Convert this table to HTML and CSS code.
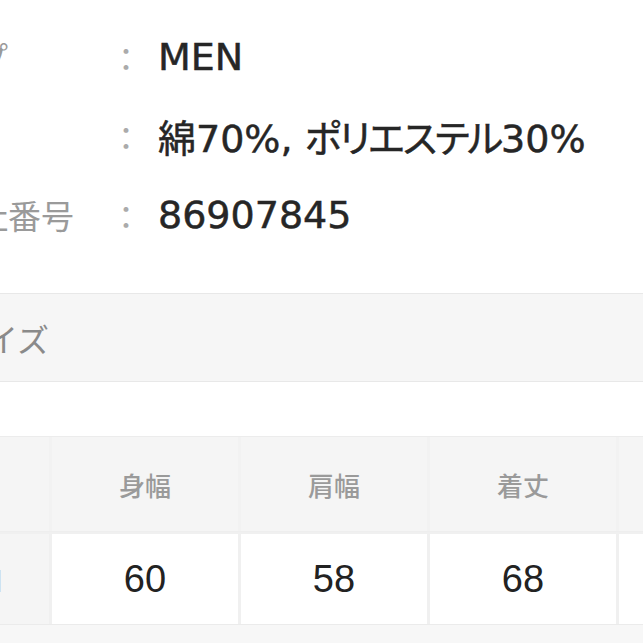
FILE: index.html
```html
<!DOCTYPE html>
<html lang="ja">
<head>
  <meta charset="UTF-8" />
  <meta name="viewport" content="width=device-width, initial-scale=1.0" />
  <title>商品詳細</title>
  <link rel="stylesheet" href="styles.css">
</head>
<body>
  <div class="page">
    <dl class="specs">
      <div class="spec-row">
        <dt class="spec-label">タイプ</dt>
        <dd class="spec-sep">：</dd>
        <dd class="spec-value">MEN</dd>
      </div>
      <div class="spec-row">
        <dt class="spec-label">素材</dt>
        <dd class="spec-sep">：</dd>
        <dd class="spec-value">綿70%, <span class="kana">ポリエステル</span>30%</dd>
      </div>
      <div class="spec-row">
        <dt class="spec-label">製造社番号</dt>
        <dd class="spec-sep">：</dd>
        <dd class="spec-value">86907845</dd>
      </div>
    </dl>

    <div class="section-bar">
      <h2 class="section-title">サイズ</h2>
    </div>

    <div class="size-table">
      <div class="size-head">
        <div class="cell head-cell"></div>
        <div class="cell head-cell">身幅</div>
        <div class="cell head-cell">肩幅</div>
        <div class="cell head-cell">着丈</div>
        <div class="cell head-cell">袖丈</div>
        <div class="cell head-cell">裄丈</div>
      </div>
      <div class="size-row">
        <div class="cell row-label">M</div>
        <div class="cell data-cell">60</div>
        <div class="cell data-cell">58</div>
        <div class="cell data-cell">68</div>
        <div class="cell data-cell">62</div>
        <div class="cell data-cell">-</div>
      </div>
    </div>
  </div>
</body>
</html>
```

FILE: styles.css
```css
* {
  margin: 0;
  padding: 0;
  box-sizing: border-box;
}
html, body {
  width: 100%;
  height: 100vh;
  overflow: hidden;
}
body {
  background: #fff;
  font-family: "Noto Sans CJK JP", sans-serif;
}
.page {
  margin-left: -136px;
  width: 1200px;
}

/* spec list */
.specs {
  padding: 17px 0 0 45px;
}
.spec-row {
  display: flex;
  align-items: center;
  height: 79px;
}
.spec-label {
  width: 201px;
  font-size: 33px;
  color: #9a9a9a;
  white-space: nowrap;
  overflow: hidden;
}
.spec-sep {
  width: 32px;
  font-size: 32px;
  text-align: center;
  color: #ababab;
}
.spec-value {
  margin-left: 16px;
  font-family: "DejaVu Sans", "Noto Sans CJK JP", sans-serif;
  font-size: 38px;
  color: #262626;
  -webkit-text-stroke: 0.5px #262626;
  font-feature-settings: "palt";
  white-space: nowrap;
}
.spec-value .kana {
  letter-spacing: -2px;
}

/* section header */
.section-bar {
  margin-top: 39px;
  height: 89px;
  display: flex;
  align-items: center;
  padding-left: 90px;
  background: #f6f6f6;
  border-top: 1px solid #e8e8e8;
  border-bottom: 1px solid #e8e8e8;
}
.section-title {
  font-size: 32px;
  font-weight: 400;
  color: #8a8a8a;
}

/* size table */
.size-table {
  margin-top: 54px;
  padding-bottom: 30px;
  background: #f7f7f7;
  border-top: 1px solid #ececec;
}
.size-head,
.size-row {
  display: grid;
  grid-template-columns: 185px repeat(5, 186px);
  column-gap: 3px;
}
.size-head {
  height: 95px;
  background: #f2f2f2;
  border-bottom: 1px solid #eeeeee;
}
.size-row {
  height: 93px;
  padding-top: 2px;
  background: #f0f0f0;
  border-bottom: 1px solid #ebebeb;
}
.cell {
  display: flex;
  align-items: center;
  justify-content: center;
}
.head-cell {
  background: #f5f5f5;
  font-size: 26px;
  font-weight: 500;
  color: #9a9a9a;
}
.row-label {
  background: #f5f5f5;
  justify-content: flex-end;
  padding-right: 46px;
  font-size: 30px;
  color: #9a9a9a;
}
.data-cell {
  background: #fff;
  font-family: "Liberation Sans", sans-serif;
  font-size: 38px;
  color: #222;
}
```
